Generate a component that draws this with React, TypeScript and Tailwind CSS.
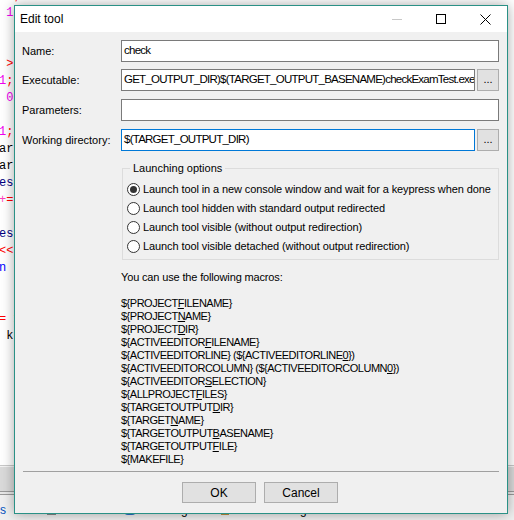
import type { ReactNode } from "react";

// Windows 10 style "Edit tool" dialog over a Code::Blocks editor

const sans = "font-['Liberation_Sans',Arial,sans-serif]";

type Seg = [string, string];

// only a few characters of each code line peek out left of the dialog
const codeLines: Seg[][] = [
  [["ll", "text-[#00a000]"], [";", "text-[#ff0000]"]],
  [[" ", ""], ["1", "text-[#f000f0]"]],
  [],
  [],
  [[" ", ""], [">", "text-[#ff0000]"], [":", "text-[#ff0000]"]],
  [["1", "text-[#f000f0]"], [";", "text-[#ff0000]"]],
  [[" ", ""], ["0", "text-[#f000f0]"]],
  [],
  [["1", "text-[#f000f0]"], [";", "text-[#ff0000]"]],
  [["arr", "text-black"]],
  [["arr", "text-black"]],
  [["es", "text-[#000080]"]],
  [["+", "text-[#ff40c0]"], ["=", "text-[#ff0000]"]],
  [],
  [["es", "text-[#000080]"]],
  [["<<", "text-[#ff0000]"]],
  [["n", "text-[#0000ff]"], [" ", ""], ["'", "text-[#c040c0]"]],
  [],
  [],
  [["=", "text-[#ff0000]"], [" ", ""], ["1", "text-black"]],
  [[" ", ""], ["k", "text-black"], ["'", "text-[#c08000]"]],
];

const macros = [
  "${PROJECT_FILENAME}",
  "${PROJECT_NAME}",
  "${PROJECT_DIR}",
  "${ACTIVEEDITOR_FILENAME}",
  "${ACTIVEEDITORLINE} (${ACTIVEEDITORLINE_0})",
  "${ACTIVEEDITORCOLUMN} (${ACTIVEEDITORCOLUMN_0})",
  "${ACTIVEEDITOR_SELECTION}",
  "${ALLPROJECT_FILES}",
  "${TARGETOUTPUT_DIR}",
  "${TARGET_NAME}",
  "${TARGETOUTPUT_BASENAME}",
  "${TARGETOUTPUT_FILE}",
  "${MAKEFILE}",
];

const launchOptions = [
  "Launch tool in a new console window and wait for a keypress when done",
  "Launch tool hidden with standard output redirected",
  "Launch tool visible (without output redirection)",
  "Launch tool visible detached (without output redirection)",
];

// "_X" -> X underlined, like a mnemonic
function Mnemonic({ text }: { text: string }) {
  const parts = text.split("_");
  return (
    <>
      {parts.map((p, i) =>
        i === 0 ? (
          <span key={i}>{p}</span>
        ) : (
          <span key={i}>
            <u className="underline-offset-[1px]">{p[0]}</u>
            {p.slice(1)}
          </span>
        ),
      )}
    </>
  );
}

function TextBox({ value, focused = false }: { value?: string; focused?: boolean }) {
  return (
    <div
      className={`flex h-[22px] min-w-0 flex-1 items-center overflow-hidden whitespace-nowrap border bg-white pl-[2px] text-[11.5px] tracking-[-0.75px] text-black ${
        focused ? "border-[#0078d7]" : "border-[#7a7a7a]"
      }`}
    >
      {value}
    </div>
  );
}

function BrowseButton() {
  return (
    <button className="flex h-[22px] w-[22px] shrink-0 items-end justify-center border border-[#adadad] bg-[#e1e1e1] pb-[5px] text-[11px] leading-none text-black">
      ...
    </button>
  );
}

function FormRow({ label, children, className = "" }: { label: string; children: ReactNode; className?: string }) {
  return (
    <div className={`flex items-center ${className}`}>
      <span className="w-[99px] shrink-0 text-[11px] text-black">{label}</span>
      <div className="flex min-w-0 flex-1 gap-[2px]">{children}</div>
    </div>
  );
}

function Radio({ label, checked = false }: { label: string; checked?: boolean }) {
  return (
    <div className="flex h-[19px] items-center gap-[3px]">
      <span className="flex h-[13px] w-[13px] items-center justify-center rounded-full border border-[#333] bg-white">
        {checked && <span className="h-[7px] w-[7px] rounded-full bg-[#333]" />}
      </span>
      <span className="whitespace-nowrap text-[11px] tracking-[-0.1px] text-black">{label}</span>
    </div>
  );
}

function CaptionButtons() {
  return (
    <div className="ml-auto flex h-full">
      <span className="flex w-[44px] items-center justify-center">
        <span className="h-px w-[10px] bg-[#c8c8c8]" />
      </span>
      <span className="flex w-[44px] items-center justify-center">
        <span className="h-[10px] w-[10px] border border-black" />
      </span>
      <span className="flex w-[44px] items-center justify-center">
        <svg width="11" height="11" viewBox="0 0 11 11" stroke="black" strokeWidth="1">
          <path d="M0.5 0.5 L10.5 10.5 M10.5 0.5 L0.5 10.5" />
        </svg>
      </span>
    </div>
  );
}

function EditorBackground() {
  return (
    <div className="flex h-full flex-col bg-white">
      <div className="relative h-[465px] overflow-hidden">
        <div className="-mt-[12px] -ml-[1px] font-['Liberation_Mono',monospace] text-[12px] leading-[17px]">
          {codeLines.map((line, i) => (
            <div key={i} className="h-[17px] whitespace-pre">
              {line.map(([t, c], j) => (
                <span key={j} className={c}>
                  {t}
                </span>
              ))}
            </div>
          ))}
        </div>
      </div>
      <div className="h-[2px] border-t border-[#c8c8c8] bg-[#f4f4f4]" />
      <div className="h-[24px] bg-[#dadada]" />
      <div className="h-[4px] border-y border-[#9a9a9a] bg-[#e8e8e8]" />
      <div className={`flex flex-1 items-start gap-[14px] bg-[#f0f0f0] pt-[6px] text-[12px] text-black ${sans}`}>
        <span className="text-[#0050c0]">s</span>
        <span className="ml-[8px] text-[#888]">‖</span>
        <span className="flex items-center gap-[6px]">
          <span className="h-[9px] w-[9px] border border-[#888] bg-[#f8f0e0]" />
          Code
        </span>
        <span className="text-[#888]">‖</span>
        <span className="flex items-center gap-[6px]">
          <span className="h-[10px] w-[12px] rounded-sm bg-[#2a70c8]" />
          Build log
        </span>
        <span className="text-[#888]">‖</span>
        <span className="flex items-center gap-[6px]">
          <span className="h-[10px] w-[8px] bg-[#c09040]" />
          Build messages
        </span>
      </div>
    </div>
  );
}

export default function App() {
  return (
    <div className={`relative h-[520px] w-[514px] overflow-hidden ${sans}`}>
      <EditorBackground />

      <div className="absolute left-[14px] top-[5px] flex h-[509px] w-[494px] flex-col border border-[#2a9186] bg-[#f0f0f0] shadow-[0_0_12px_rgba(0,0,0,0.35)]">
        <div className="flex h-[26px] shrink-0 items-center bg-white">
          <span className="pl-[5px] text-[12px] text-black">Edit tool</span>
          <CaptionButtons />
        </div>

        <div className="flex flex-1 flex-col pl-[7px] pr-[8px] pt-[8px]">
          <FormRow label="Name:">
            <TextBox value="check" />
          </FormRow>
          <FormRow label="Executable:" className="mt-[7px]">
            <TextBox value="GET_OUTPUT_DIR)$(TARGET_OUTPUT_BASENAME)checkExamTest.exe" />
            <BrowseButton />
          </FormRow>
          <FormRow label="Parameters:" className="mt-[8px]">
            <TextBox />
          </FormRow>
          <FormRow label="Working directory:" className="mt-[8px]">
            <TextBox value="$(TARGET_OUTPUT_DIR)" focused />
            <BrowseButton />
          </FormRow>

          <fieldset className="ml-[100px] mt-[11px] border border-[#dcdcdc] pb-[3px] pl-[4px]">
            <legend className="ml-[3px] px-[3px] text-[11px] leading-[13px] text-black">Launching options</legend>
            <div className="mt-[5px] flex flex-col">
              {launchOptions.map((o, i) => (
                <Radio key={o} label={o} checked={i === 0} />
              ))}
            </div>
          </fieldset>

          <div className="ml-[99px] mt-[11px] text-[11px] leading-[13px] text-black">
            <div className="tracking-[-0.15px]">You can use the following macros:</div>
            <div className="h-[13px]" />
            {macros.map((m) => (
              <div key={m} className="whitespace-nowrap tracking-[-0.5px]">
                <Mnemonic text={m} />
              </div>
            ))}
          </div>

          <div className="ml-px mt-[5px] border-t border-[#a0a0a0]" />

          <div className="mt-[10px] flex justify-center gap-[8px] pr-px">
            <button className="h-[21px] w-[74px] border border-[#adadad] bg-[#e1e1e1] text-[12px] text-black">OK</button>
            <button className="h-[21px] w-[74px] border border-[#adadad] bg-[#e1e1e1] text-[12px] text-black">Cancel</button>
          </div>
        </div>
      </div>
    </div>
  );
}
